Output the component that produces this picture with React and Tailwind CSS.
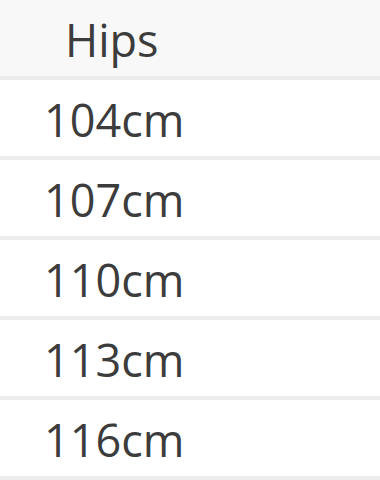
import React from 'react';

const rows = ['104cm', '107cm', '110cm', '113cm', '116cm'];

export default function App() {
  return (
    <div
      className="w-[380px] h-[480px] overflow-hidden bg-white text-[#3c3c3c]"
      style={{ fontFamily: '"Open Sans", "Noto Sans", sans-serif' }}
    >
      <div className="h-[80px] flex items-center pl-[65px] pt-[2px] bg-[#f8f8f8] border-b-4 border-[#ececec] text-[45px] leading-none">
        Hips
      </div>
      {rows.map((r) => (
        <div
          key={r}
          className="h-[80px] flex items-center pl-[44px] pt-[2px] border-b-4 border-[#ececec] text-[45px] leading-none"
        >
          {r}
        </div>
      ))}
    </div>
  );
}
